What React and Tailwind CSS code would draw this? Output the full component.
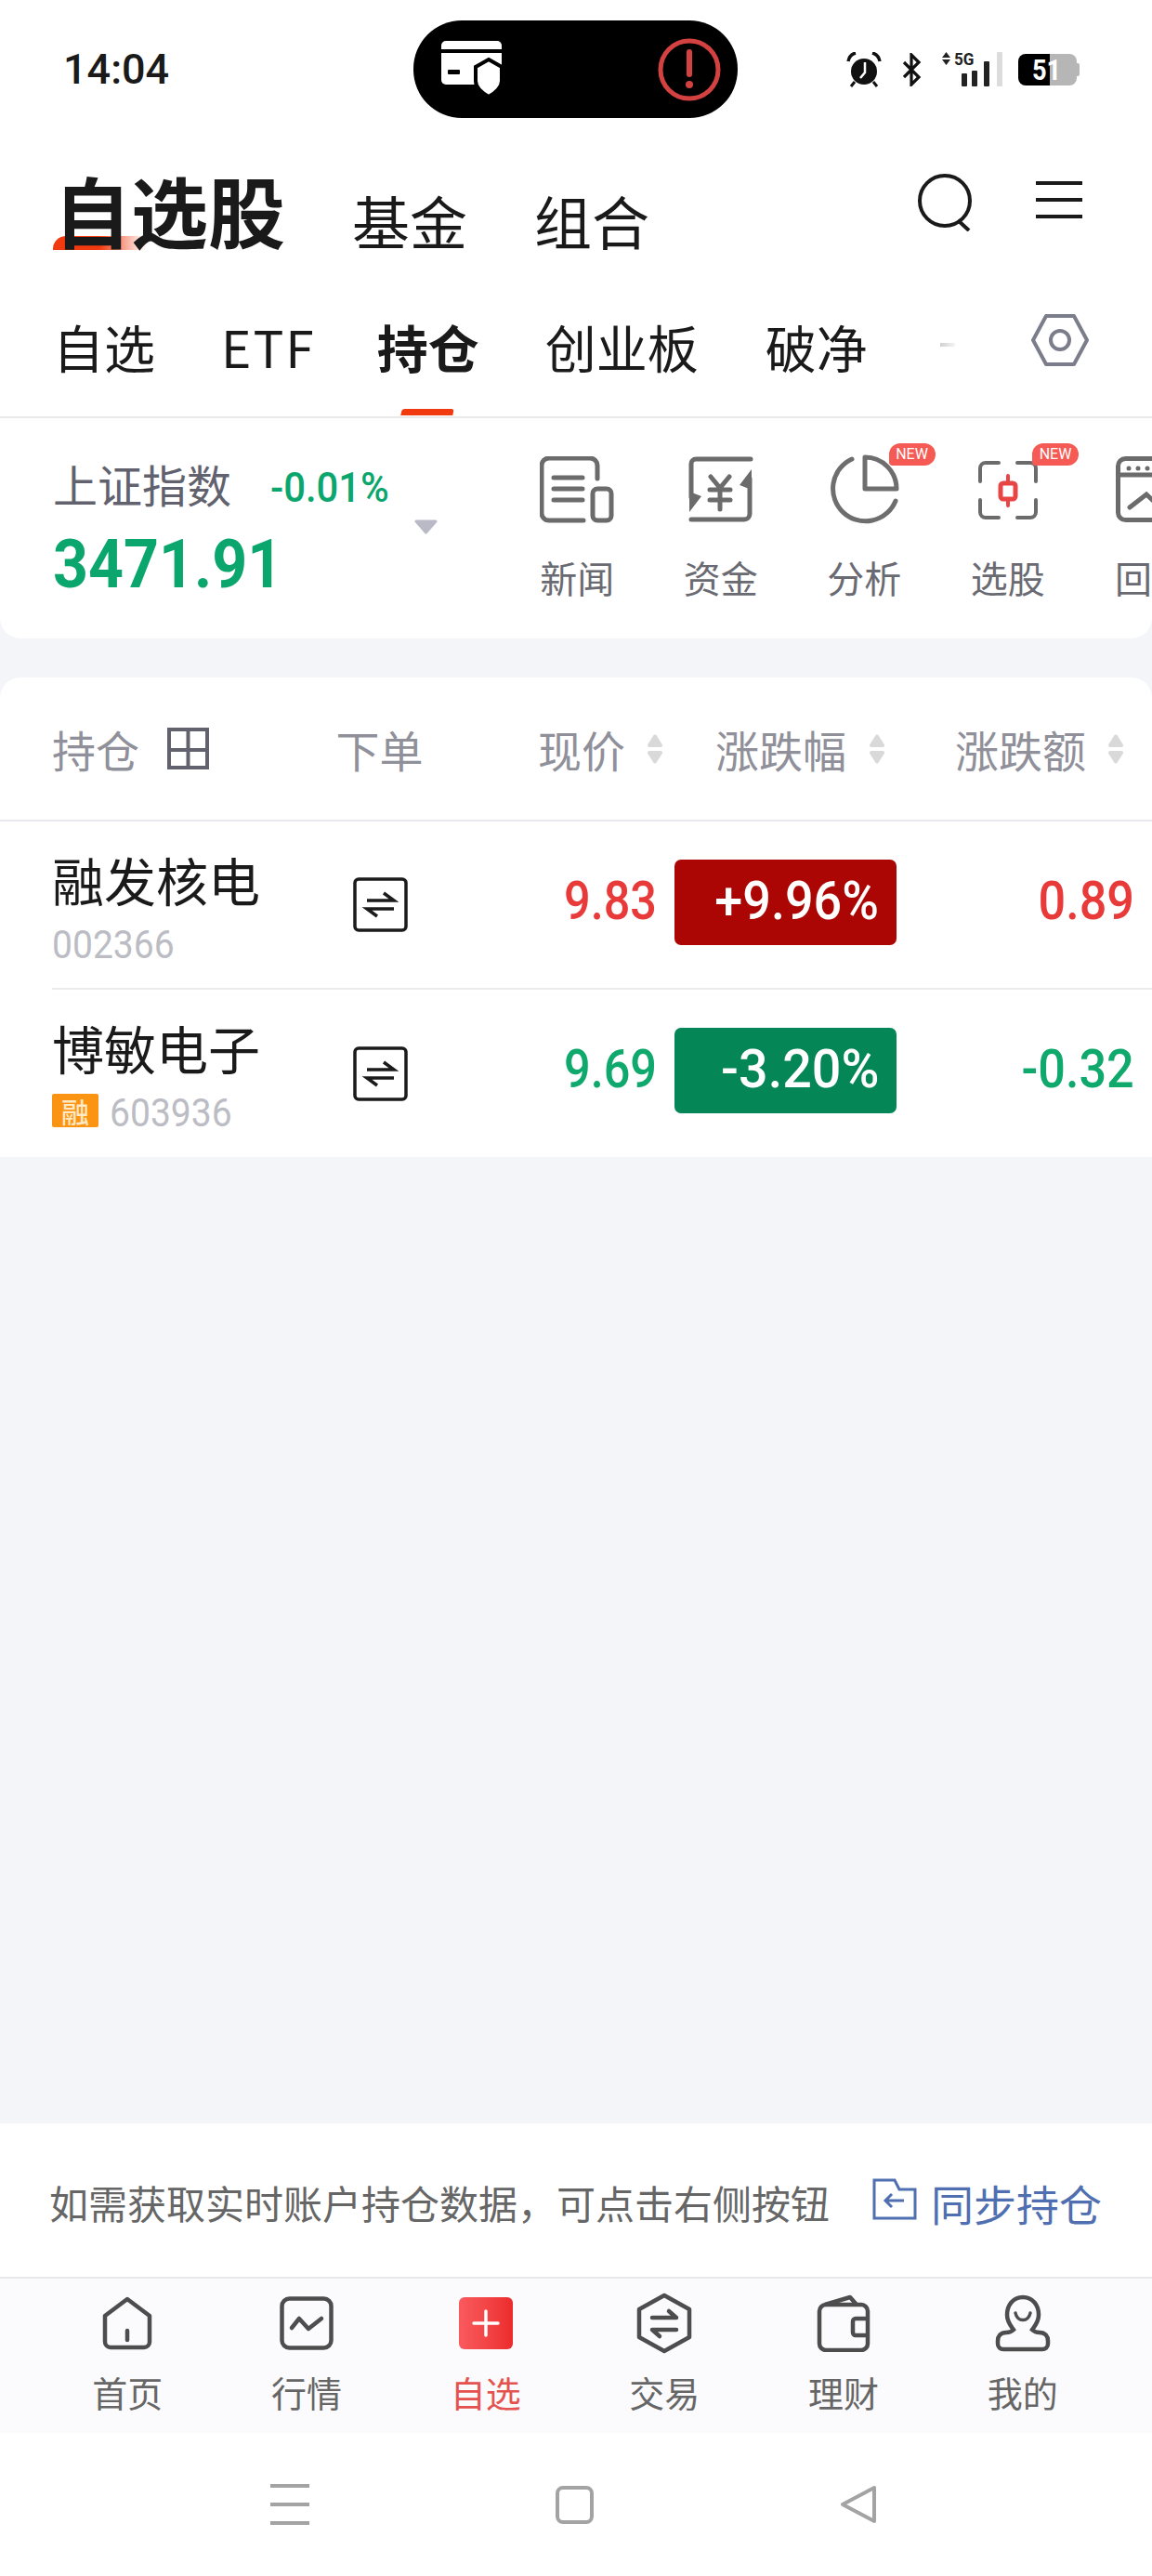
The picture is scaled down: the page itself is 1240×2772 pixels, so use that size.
import React from 'react';

const cjk = 'font-["Noto_Sans_CJK_SC",sans-serif]';
const num = 'font-["Roboto",sans-serif]';

const StatusBar = () => (
    <div className="flex h-[149px] items-center">
        <div className={`${num} w-[445px] pl-[68px] text-[45px] leading-none font-medium text-[#1a1a1a]`}>14:04</div>
        <div className="flex h-[105px] w-[349px] items-center rounded-[52px] bg-black pl-[30px]">
            <svg width="68" height="62" viewBox="0 0 68 62">
                <rect x="0" y="0" width="65" height="47" rx="5" fill="#fff" />
                <rect x="0" y="9" width="65" height="4" fill="#000" />
                <rect x="7" y="31" width="13" height="5" rx="1" fill="#000" />
                <path d="M51 20 L65 28 V43 C65 50 58 56 51 60 C44 56 37 50 37 43 V28 Z" fill="#fff" stroke="#000" strokeWidth="4" />
            </svg>
            <svg className="ml-[165px]" width="68" height="68" viewBox="0 0 68 68" fill="none">
                <circle cx="34" cy="34" r="31" stroke="#d44141" strokeWidth="5" />
                <path d="M34 15 V39" stroke="#d44141" strokeWidth="6" strokeLinecap="round" />
                <circle cx="34" cy="50" r="4" fill="#d44141" />
            </svg>
        </div>
        <div className="ml-[117px] flex items-center">
            <svg width="38" height="38" viewBox="0 0 38 38" fill="none">
                <circle cx="19" cy="21" r="14" fill="#111" />
                <path d="M20 11 V22 L15 28" stroke="#fff" strokeWidth="2.5" />
                <path d="M2 10 C3 5 6 2 10 1 M36 10 C35 5 32 2 28 1" stroke="#111" strokeWidth="3.5" />
                <path d="M9 32 L5 37 M29 32 L33 37" stroke="#111" strokeWidth="3" />
            </svg>
            <svg className="ml-[22px]" width="21" height="36" viewBox="0 0 21 36" fill="none">
                <path d="M2 10 L18 26 L10 34 V2 L18 10 L2 26" stroke="#111" strokeWidth="3.2" />
            </svg>
            <div className="relative ml-[21px] h-[37px] w-[67px]">
                <svg width="67" height="37" viewBox="0 0 67 37">
                    <path d="M5.5 0 L10 6 H1 Z M5.5 14 L10 8 H1 Z" fill="#222" />
                    <rect x="22" y="23" width="6" height="14" rx="1" fill="#222" />
                    <rect x="33" y="20" width="6" height="17" rx="1" fill="#222" />
                    <rect x="46" y="10" width="6" height="27" rx="1" fill="#222" />
                    <rect x="60" y="0" width="6" height="37" rx="1" fill="#dcdcdc" />
                </svg>
                <span className={`${num} absolute top-0 left-[14px] origin-left scale-x-[0.9] text-[19px] leading-[16px] font-bold text-[#222]`}>5G</span>
            </div>
            <div className="relative ml-[16px] flex h-[34px] w-[66px]">
                <div className="w-[34px] rounded-l-[8px] bg-black" />
                <div className="w-[29px] rounded-r-[8px] bg-[#b6b6b6]" />
                <div className="my-auto h-[14px] w-[3px] rounded-r-[2px] bg-[#b6b6b6]" />
                <span className={`${num} absolute top-0 left-[15px] origin-left scale-x-[0.85] text-[32px] leading-[34px] font-bold text-white`}>51</span>
            </div>
        </div>
    </div>
);

const Header = () => (
    <div className={`${cjk} border-b-2 border-[#e9e9ec] bg-white`}>
        <StatusBar />
        <div className="flex items-end pt-[38px] pl-[58px]">
            <div className="relative mb-[5px] text-[83px] leading-[75px] font-bold text-[#1a1a1a]">
                <span className="absolute top-[66px] -left-[1px] h-[15px] w-[100px] rounded-tl-[14px] bg-linear-to-r from-[#f23a10] via-[#f23a10] to-[#f23a1000]" />
                <span className="relative">自选股</span>
            </div>
            <div className="ml-[72px] text-[62px] leading-[61px] text-[#1a1a1a]">基金</div>
            <div className="ml-[72px] text-[62px] leading-[61px] text-[#1a1a1a]">组合</div>
            <svg className="mb-[19px] ml-[288px]" width="60" height="62" viewBox="0 0 60 62" fill="none">
                <circle cx="30" cy="29" r="27" stroke="#1a1a1a" strokeWidth="4" />
                <path d="M44 50 L56 61" stroke="#1a1a1a" strokeWidth="4" />
            </svg>
            <div className="mb-[33px] ml-[68px] flex w-[50px] flex-col gap-[14px]">
                <div className="h-[4px] bg-[#1a1a1a]" />
                <div className="h-[4px] bg-[#1a1a1a]" />
                <div className="h-[4px] bg-[#1a1a1a]" />
            </div>
        </div>
        <div className="mt-[77px] flex pb-[48px] pl-[57px] text-[55px] leading-[55px] text-[#1a1a1a]">
            <span>自选</span>
            <span className="ml-[71px] tracking-[2px]">ETF</span>
            <span className="relative ml-[66px] font-bold">
                持仓
                <span className="absolute top-[95px] left-[26px] h-[7px] w-[56px] -skew-x-12 rounded-t-[3px] bg-[#f23a10]" />
            </span>
            <span className="ml-[71px]">创业板</span>
            <span className="ml-[72px]">破净</span>
            <div className="mt-[24px] ml-[78px] h-[4px] w-[16px] bg-linear-to-r from-[#d0d0d0] to-[#f5f5f5]" />
            <svg className="-mt-[8px] ml-[82px]" width="62" height="58" viewBox="0 0 62 58" fill="none">
                <path d="M16 3 H46 L60 29 L46 55 H16 L2 29 Z" stroke="#7b7d8b" strokeWidth="4" strokeLinejoin="round" />
                <circle cx="31" cy="29" r="10" stroke="#7b7d8b" strokeWidth="4" />
            </svg>
        </div>
    </div>
);

const NewsIcon = () => (
    <svg width="80" height="72" viewBox="0 0 80 72" fill="none" stroke="#6b6b6b" strokeWidth="5" strokeLinecap="round">
        <path d="M62 24 V10 a8 8 0 0 0 -8 -8 H10 a8 8 0 0 0 -8 8 V60 a8 8 0 0 0 8 9 H47" />
        <rect x="57" y="35" width="20" height="34" rx="5" />
        <path d="M15 23 H46 M15 35 H46 M15 47 H46" />
    </svg>
);

const FundsIcon = () => (
    <svg width="70" height="72" viewBox="0 0 70 72" fill="none" stroke="#6b6b6b" strokeWidth="5" strokeLinecap="round">
        <path d="M67 3 H8 a5 5 0 0 0 -5 5 V44" />
        <path d="M3 68 H60 a6 6 0 0 0 6 -6 V24" />
        <path d="M1 60 V38 L14 43 Z M68 14 V36 L55 31 Z" fill="#6b6b6b" stroke="none" />
        <path d="M24 22 L34 34 L44 22 M23 36 H45 M23 47 H45 M34 34 V57" />
    </svg>
);

const PieIcon = () => (
    <svg width="76" height="76" viewBox="0 0 76 76" fill="none" stroke="#6e6e6e" strokeWidth="5" strokeLinecap="round">
        <path d="M25 5 A35 35 0 1 0 72 50" />
        <path d="M39 3 V37 H73 A34 34 0 0 0 39 3 Z" strokeLinejoin="round" />
    </svg>
);

const PickIcon = () => (
    <svg width="64" height="63" viewBox="0 0 64 63" fill="none" stroke="#6b6b6b" strokeWidth="4" strokeLinecap="round">
        <path d="M2 22 V8 a6 6 0 0 1 6 -6 H22 M42 2 H56 a6 6 0 0 1 6 6 V22 M2 42 V55 a6 6 0 0 0 6 6 H22 M42 61 H56 a6 6 0 0 0 6 -6 V42" />
        <rect x="24" y="24" width="16" height="17" rx="3" stroke="#e84545" strokeWidth="5" />
        <path d="M32 16 V24 M32 41 V48" stroke="#e84545" strokeWidth="4" />
    </svg>
);

const ReplayIcon = () => (
    <svg width="76" height="72" viewBox="0 0 76 72" fill="none" stroke="#6b6b6b" strokeWidth="5" strokeLinecap="round">
        <rect x="2.5" y="2.5" width="71" height="66" rx="8" />
        <path d="M3 20 H73" />
        <circle cx="14" cy="13" r="2.5" fill="#6b6b6b" stroke="none" />
        <circle cx="24" cy="13" r="2.5" fill="#6b6b6b" stroke="none" />
        <circle cx="34" cy="13" r="2.5" fill="#6b6b6b" stroke="none" />
        <path d="M15 55 L33 41 L48 55" strokeWidth="5" />
    </svg>
);

const NewBadge = () => (
    <span className='absolute top-[27px] right-[1px] h-[24px] w-[50px] rounded-tl-[12px] rounded-tr-[12px] rounded-br-[12px] rounded-bl-[4px] bg-[#f55a54] text-center font-["Roboto",sans-serif] text-[16px] leading-[24px] text-white'>
        NEW
    </span>
);

const quickLinks = [
    { label: '新闻', Icon: NewsIcon },
    { label: '资金', Icon: FundsIcon },
    { label: '分析', Icon: PieIcon, isNew: true },
    { label: '选股', Icon: PickIcon, isNew: true },
    { label: '回', Icon: ReplayIcon, clip: true },
];

const IndexCard = () => (
    <div className={`${cjk} flex h-[237px] overflow-hidden rounded-b-[22px] bg-white`}>
        <div className="w-[446px] shrink-0 pt-[41px] pl-[57px]">
            <div className="flex items-center whitespace-nowrap">
                <span className="text-[48px] leading-[48px] text-[#62626e]">上证指数</span>
                <span className={`${num} mt-[10px] ml-[42px] origin-left scale-x-[0.95] text-[44px] leading-[48px] font-medium text-[#0ba66d]`}>-0.01%</span>
            </div>
            <div className={`${num} mt-[23px] origin-left scale-x-[0.92] text-[72px] leading-[72px] font-bold text-[#0ba66d]`}>3471.91</div>
        </div>
        <svg className="mt-[109px] shrink-0" width="25" height="16" viewBox="0 0 25 16">
            <path d="M2 2 H23 L12.5 14 Z" fill="#b9bac6" stroke="#b9bac6" strokeWidth="3" strokeLinejoin="round" />
        </svg>
        <div className="ml-[73px] flex shrink-0">
            {quickLinks.map(({ label, Icon, isNew, clip }) => (
                <div key={label} className={`relative flex w-[154.5px] shrink-0 flex-col ${clip ? 'items-start pl-[38px]' : 'items-center'}`}>
                    <div className={`mt-[39px] flex h-[76px] items-center ${clip ? 'w-[76px] translate-x-[1px]' : ''}`}>
                        <Icon />
                    </div>
                    {isNew && <NewBadge />}
                    <span className="mt-[36px] text-[40px] leading-[40px] text-[#6a6a72]">{label}</span>
                </div>
            ))}
        </div>
    </div>
);

const SortIcon = () => (
    <svg width="16" height="32" viewBox="0 0 16 32" fill="#d9d9d9" stroke="#d9d9d9" strokeWidth="4" strokeLinejoin="round">
        <path d="M8 2.5 L14 12 H2 Z" />
        <path d="M8 29.5 L14 20 H2 Z" />
    </svg>
);

const colClass = 'grid grid-cols-[362px_95px_260px_248px_275px]';

const HeadCell = ({ children, className = '' }) => (
    <div className={`flex items-center justify-end text-[47px] leading-[47px] text-[#8f9099] ${className}`}>
        {children}
    </div>
);

const TradeIcon = () => (
    <svg width="59" height="59" viewBox="0 0 59 59" fill="none">
        <rect x="2" y="2" width="55" height="55" rx="4" stroke="#1b1b1b" strokeWidth="3.5" />
        <path d="M15 25 H44 L33 17 M44 34 H15 L26 42" stroke="#1b1b1b" strokeWidth="3.5" />
    </svg>
);

const stocks = [
    { name: '融发核电', code: '002366', price: '9.83', pct: '+9.96%', diff: '0.89', up: true, h: 'h-[179px]', pctScale: 'scale-x-[0.93]' },
    { name: '博敏电子', code: '603936', price: '9.69', pct: '-3.20%', diff: '-0.32', margin: true, h: 'h-[180px]', pctScale: 'scale-x-[0.96]' },
];

const StockRow = ({ s }) => {
    const color = s.up ? 'text-[#e93a3a]' : 'text-[#0fa86d]';
    return (
        <div className={`${colClass} ${s.h} items-center`}>
            <div className="h-full pt-[34px] pl-[56px]">
                <div className="text-[56px] leading-[56px] text-[#1a1a1a]">{s.name}</div>
                <div className="mt-[22px] flex">
                    {s.margin && (
                        <span className="mr-[12px] h-[36px] w-[50px] rounded-[2px] bg-[#fb9313] text-center text-[30px] leading-[36px] font-medium text-[#ffe9c4]">融</span>
                    )}
                    <span className={`${num} origin-left scale-x-[0.93] text-[42px] leading-[42px] text-[#bcbdc4]`}>{s.code}</span>
                </div>
            </div>
            <div className="flex justify-center">
                <TradeIcon />
            </div>
            <div className="flex justify-end pr-[10px] pb-[10px]">
                <span className={`${num} ${color} origin-right scale-x-[0.87] text-[58px] leading-[58px] font-medium`}>{s.price}</span>
            </div>
            <div className="pb-[6px] pl-[9px]">
                <div className={`flex h-[92px] w-[239px] items-center justify-end rounded-[7px] pr-[19px] pb-[4px] ${s.up ? 'bg-[#ac0604]' : 'bg-[#048657]'}`}>
                    <span className={`${num} ${s.pctScale} origin-right text-[58px] leading-[58px] font-medium text-white`}>{s.pct}</span>
                </div>
            </div>
            <div className="flex justify-end pr-[19px] pb-[10px]">
                <span className={`${num} ${color} origin-right scale-x-[0.9] text-[58px] leading-[58px] font-medium`}>{s.diff}</span>
            </div>
        </div>
    );
};

const Holdings = () => (
    <div className={`${cjk} mt-[42px] rounded-t-[22px] bg-white`}>
        <div className={`${colClass} h-[155px] items-center border-b-2 border-[#e8e8ee]`}>
            <div className="flex items-center pl-[56px] text-[47px] leading-[47px] text-[#8f9099]">
                持仓
                <svg className="ml-[30px]" width="45" height="45" viewBox="0 0 45 45" fill="none" stroke="#62626e" strokeWidth="4">
                    <rect x="2" y="2" width="41" height="41" />
                    <path d="M22.5 2 V43 M2 24 H43" />
                </svg>
            </div>
            <div className="-ml-[2px] text-center text-[47px] leading-[47px] text-[#8f9099]">下单</div>
            <HeadCell className="pr-[4px]">
                现价
                <span className="ml-[24px] flex"><SortIcon /></span>
            </HeadCell>
            <HeadCell className="pr-[13px]">
                涨跌幅
                <span className="ml-[25px] flex"><SortIcon /></span>
            </HeadCell>
            <HeadCell className="pr-[31px]">
                涨跌额
                <span className="ml-[24px] flex"><SortIcon /></span>
            </HeadCell>
        </div>
        <StockRow s={stocks[0]} />
        <div className="ml-[56px] h-[2px] bg-[#ebebee]" />
        <StockRow s={stocks[1]} />
    </div>
);

const SyncBar = () => (
    <div className={`${cjk} flex h-[165px] items-center bg-white pt-[4px] pl-[53px]`}>
        <span className="text-[42px] leading-[42px] text-[#666]">如需获取实时账户持仓数据，可点击右侧按钮</span>
        <svg className="-mt-[6px] ml-[46px]" width="48" height="45" viewBox="0 0 48 45" fill="none" stroke="#4f6fb0" strokeWidth="3">
            <path d="M2 2 H24 L29 12 H46 V43 H2 Z" />
            <path d="M34 24 H14 M21 17 L14 24 L21 31" />
        </svg>
        <span className="ml-[15px] text-[46px] leading-[46px] text-[#4f6fb0]">同步持仓</span>
    </div>
);

const HomeIcon = () => (
    <svg width="54" height="58" viewBox="0 0 54 58" fill="none" stroke="#4d4d4d" strokeWidth="4.5" strokeLinecap="round" strokeLinejoin="round">
        <path d="M3 21 L27 3 L51 21 V49 a6 6 0 0 1 -6 6 H9 a6 6 0 0 1 -6 -6 Z" />
        <path d="M27 37 V47" />
    </svg>
);

const ChartIcon = () => (
    <svg width="58" height="58" viewBox="0 0 58 58" fill="none" stroke="#4d4d4d" strokeWidth="4.5" strokeLinecap="round" strokeLinejoin="round">
        <rect x="2.5" y="2.5" width="53" height="53" rx="8" />
        <path d="M13 34 L21 24 L31 35 L45 24" />
    </svg>
);

const PlusIcon = () => (
    <div className="flex h-[56px] w-[58px] items-center justify-center rounded-[6px] bg-linear-to-r from-[#f95a5e] to-[#ec2a2b]">
        <svg width="30" height="30" viewBox="0 0 30 30" stroke="#fff" strokeWidth="3.5" strokeLinecap="round">
            <path d="M15 2 V28 M2 15 H28" />
        </svg>
    </div>
);

const TradeHexIcon = () => (
    <svg width="62" height="66" viewBox="0 0 62 66" fill="none" stroke="#4d4d4d" strokeWidth="4.5" strokeLinejoin="round" strokeLinecap="round">
        <path d="M31 3 L58 18 V48 L31 63 L4 48 V18 Z" />
        <path d="M18 27 H44 L36 20 M44 40 H18 L26 47" strokeWidth="4.5" />
    </svg>
);

const WalletIcon = () => (
    <svg width="58" height="62" viewBox="0 0 58 62" fill="none" stroke="#4d4d4d" strokeWidth="4.5" strokeLinejoin="round">
        <rect x="3" y="11" width="52" height="49" rx="7" />
        <path d="M55 26 H42 a3 3 0 0 0 -3 3 V41 a3 3 0 0 0 3 3 H55" />
        <path d="M9 11 L36 3 L43 11" />
    </svg>
);

const UserIcon = () => (
    <svg width="60" height="62" viewBox="0 0 60 62" fill="none" stroke="#4d4d4d" strokeWidth="4.5" strokeLinecap="round">
        <path d="M30 3 C41 3 47 12 47 22 C47 30 42 35 40 38 C42 40 44 41 48 41 C54 41 57 45 57 50 V53 C57 57 54 59 51 59 H9 C6 59 3 57 3 53 V50 C3 45 6 41 12 41 C16 41 18 40 20 38 C18 35 13 30 13 22 C13 12 19 3 30 3 Z" />
        <path d="M22 20 C24 30 36 30 38 20" strokeWidth="3.5" />
    </svg>
);

const tabs = [
    { label: '首页', Icon: HomeIcon },
    { label: '行情', Icon: ChartIcon },
    { label: '自选', Icon: PlusIcon, active: true },
    { label: '交易', Icon: TradeHexIcon },
    { label: '理财', Icon: WalletIcon },
    { label: '我的', Icon: UserIcon },
];

const TabBar = () => (
    <div className={`${cjk} grid h-[168px] grid-cols-6 border-t-2 border-[#e8e8ec] bg-[#fbfbfd] pr-[43px] pl-[41px]`}>
        {tabs.map(({ label, Icon, active }) => (
            <div key={label} className="flex flex-col items-center pt-[15px]">
                <div className="flex h-[66px] items-center justify-center">
                    <Icon />
                </div>
                <span className={`mt-[21px] text-[38px] leading-[40px] ${active ? 'text-[#e4534f]' : 'text-[#666]'}`}>{label}</span>
            </div>
        ))}
    </div>
);

const NavBar = () => (
    <div className="flex h-[154px] items-center gap-[265px] bg-white pl-[291px]">
        <div className="flex w-[42px] flex-col gap-[16px]">
            <div className="h-[4px] bg-[#a3a3a3]" />
            <div className="h-[4px] bg-[#a3a3a3]" />
            <div className="h-[4px] bg-[#a3a3a3]" />
        </div>
        <div className="h-[41px] w-[41px] rounded-[8px] border-[4px] border-[#a3a3a3]" />
        <svg width="40" height="42" viewBox="0 0 40 42" fill="none">
            <path d="M37 3 V39 L3 21 Z" stroke="#a3a3a3" strokeWidth="4" strokeLinejoin="round" />
        </svg>
    </div>
);

const App = () => (
    <div className="flex h-[2772px] w-[1240px] flex-col overflow-hidden bg-[#f3f5f9]">
        <Header />
        <IndexCard />
        <Holdings />
        <div className="flex-1" />
        <SyncBar />
        <TabBar />
        <NavBar />
    </div>
);

export default App;
